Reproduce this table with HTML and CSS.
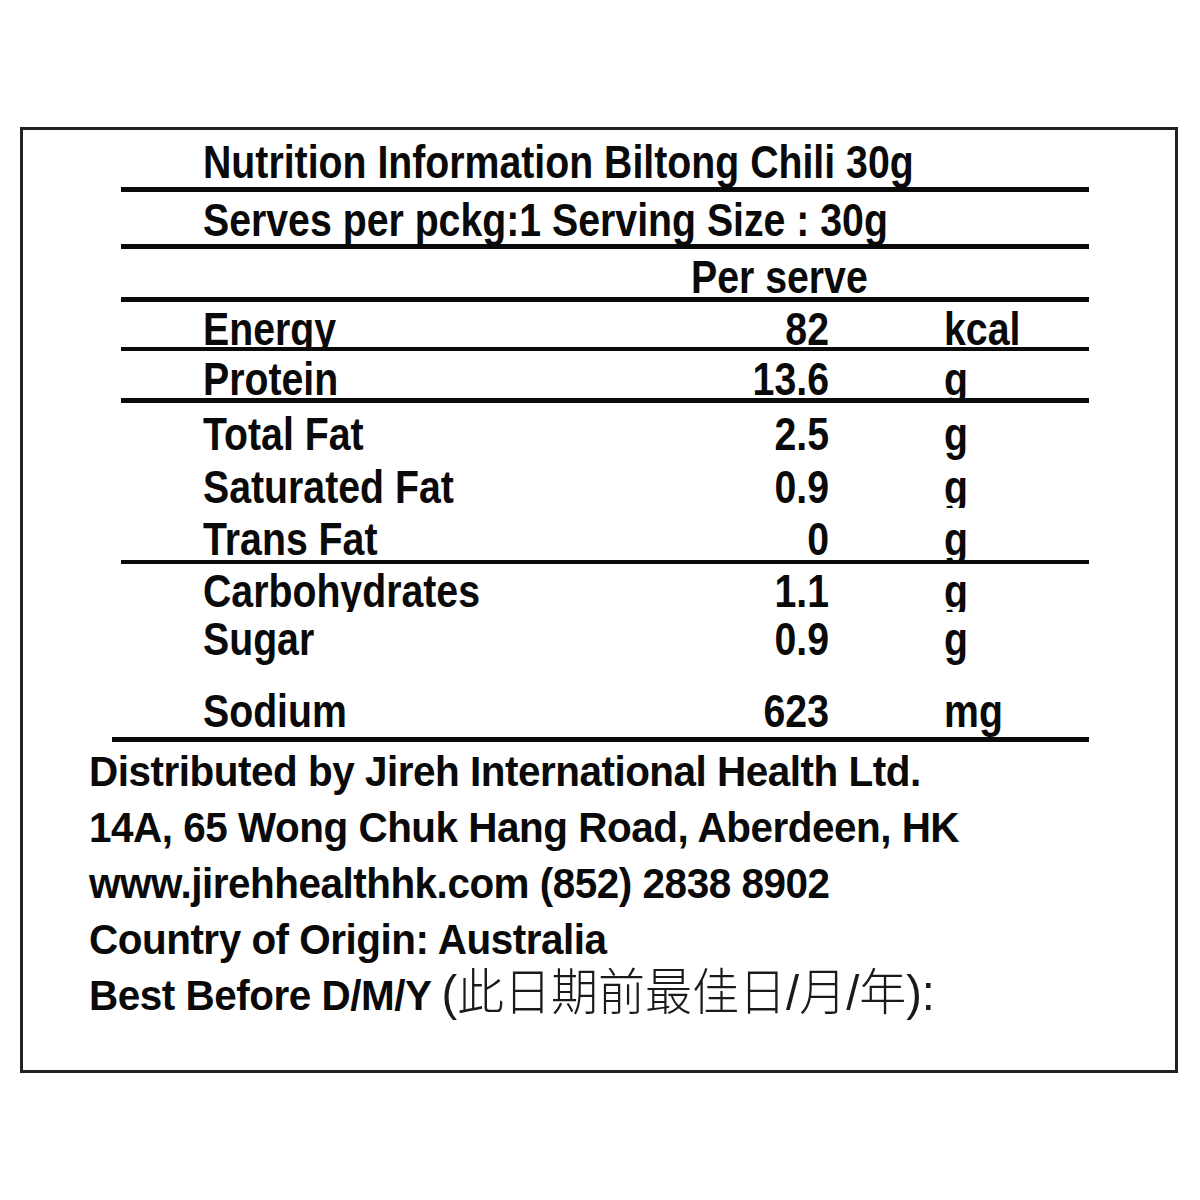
FILE: index.html
```html
<!DOCTYPE html>
<html lang="en">
<head>
<meta charset="utf-8">
<title>Nutrition Information Biltong Chili 30g</title>
<link rel="stylesheet" href="styles.css">
</head>
<body>
<div class="label">
  <div class="facts">
    <div class="row r-title rule"><span class="txt">Nutrition Information Biltong Chili 30g</span></div>
    <div class="row r-serves rule"><span class="txt">Serves per pckg:1 Serving Size : 30g</span></div>
    <div class="row r-per rule"><span class="txt per">Per serve</span></div>
    <div class="row nut r-energy rule thin"><span class="name">Energy</span><span class="val">82</span><span class="unit">kcal</span></div>
    <div class="row nut r-protein rule"><span class="name">Protein</span><span class="val">13.6</span><span class="unit">g</span></div>
    <div class="row nut r-fat open"><span class="name">Total Fat</span><span class="val">2.5</span><span class="unit">g</span></div>
    <div class="row nut r-sat"><span class="name">Saturated Fat</span><span class="val">0.9</span><span class="unit">g</span></div>
    <div class="row nut r-trans rule thin"><span class="name">Trans Fat</span><span class="val">0</span><span class="unit">g</span></div>
    <div class="row nut r-carb"><span class="name">Carbohydrates</span><span class="val">1.1</span><span class="unit">g</span></div>
    <div class="row nut r-sugar open"><span class="name">Sugar</span><span class="val">0.9</span><span class="unit">g</span></div>
    <div class="row nut r-sodium rule wide"><span class="name">Sodium</span><span class="val">623</span><span class="unit">mg</span></div>
  </div>
  <div class="footer">
    <p>Distributed by Jireh International Health Ltd.</p>
    <p>14A, 65 Wong Chuk Hang Road, Aberdeen, HK</p>
    <p>www.jirehhealthhk.com (852) 2838 8902</p>
    <p>Country of Origin: Australia</p>
    <p>Best Before D/M/Y <span class="cjk">(此日期前最佳日/月/年):</span></p>
  </div>
</div>
</body>
</html>
```

FILE: styles.css
```css
html, body {
  margin: 0;
  padding: 0;
  background: #ffffff;
}

body {
  padding: 127px 0 0 20px;
  color: #0a0a0a;
}

.label {
  box-sizing: border-box;
  width: 1158px;
  height: 946px;
  border: 3px solid #222222;
  background: #ffffff;
  overflow: hidden;
}

/* ---------- nutrition table ---------- */

.facts {
  margin-left: 98px;
  width: 968px;
  font-family: "Liberation Sans", Arial, sans-serif;
  font-weight: 700;
  font-size: 47px;
}

.row {
  box-sizing: border-box;
  display: grid;
  grid-template-columns: 1fr;
  align-content: start;
  padding-left: 82px;
  overflow: hidden;
}

.row.open {
  overflow: visible;
}

.nut {
  grid-template-columns: 1fr 130px 115px 145px;
}

.row .txt,
.row .name,
.row .val,
.row .unit {
  display: block;
  line-height: 47px;
  white-space: nowrap;
  transform: scaleX(0.835);
  transform-origin: left center;
}

.row .per {
  margin-left: 488px;
}

.row .val {
  grid-column: 2;
  text-align: right;
  transform-origin: right center;
}

.row .unit {
  grid-column: 4;
}

.rule {
  border-bottom: 5px solid #0a0a0a;
}

.rule.thin {
  border-bottom-width: 4px;
}

.wide {
  margin-left: -9px;
  padding-left: 91px;
}

.r-title   { height: 62px; padding-top: 8px; }
.r-serves  { height: 57px; padding-top: 4px; }
.r-per     { height: 53px; padding-top: 4px; }
.r-energy  { height: 49px; padding-top: 3px; }
.r-protein { height: 52px; padding-top: 4px; }
.r-fat     { height: 53px; padding-top: 7px; }
.r-sat     { height: 52px; padding-top: 7px; }
.r-trans   { height: 56px; padding-top: 7px; }
.r-carb    { height: 48px; padding-top: 3px; }
.r-sugar   { height: 48px; padding-top: 3px; }
.r-sodium  { height: 82px; padding-top: 27px; }

/* ---------- distributor block ---------- */

.footer {
  margin-left: 66px;
  padding-top: 1px;
  font-family: "Liberation Sans", Arial, sans-serif;
  font-weight: 700;
  font-size: 43px;
  letter-spacing: -0.5px;
}

.footer p {
  margin: 0;
  line-height: 56px;
  white-space: nowrap;
  transform: scaleX(0.94);
  transform-origin: left center;
}

.cjk {
  font-family: "Liberation Sans", "Noto Sans CJK SC", sans-serif;
  font-weight: 300;
  font-size: 50px;
  letter-spacing: 0;
  line-height: 1;
  color: #1a1a1a;
}
```
